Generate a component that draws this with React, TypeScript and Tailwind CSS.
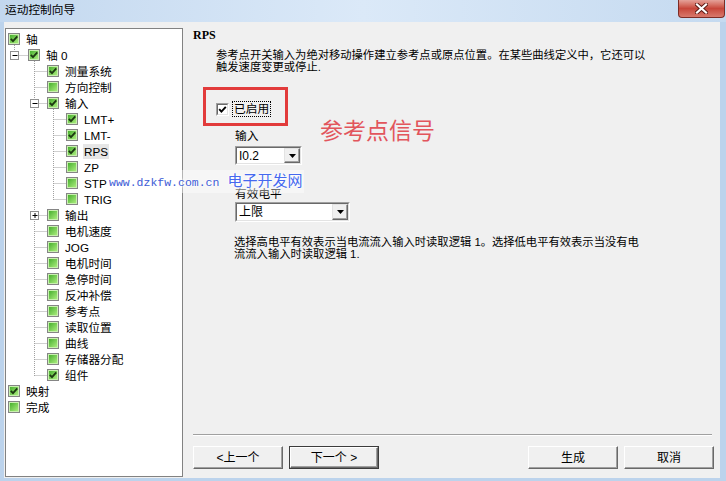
import React from 'react';

type TreeNode = {
  label: string;
  level: number;
  checked?: boolean;
  expander?: 'minus' | 'plus';
  selected?: boolean;
};

const nodes: TreeNode[] = [
  { label: '轴', level: 0, checked: true },
  { label: '轴 0', level: 1, checked: true, expander: 'minus' },
  { label: '测量系统', level: 2, checked: true },
  { label: '方向控制', level: 2 },
  { label: '输入', level: 2, checked: true, expander: 'minus' },
  { label: 'LMT+', level: 3, checked: true },
  { label: 'LMT-', level: 3, checked: true },
  { label: 'RPS', level: 3, checked: true, selected: true },
  { label: 'ZP', level: 3 },
  { label: 'STP', level: 3 },
  { label: 'TRIG', level: 3 },
  { label: '输出', level: 2, expander: 'plus' },
  { label: '电机速度', level: 2 },
  { label: 'JOG', level: 2 },
  { label: '电机时间', level: 2 },
  { label: '急停时间', level: 2 },
  { label: '反冲补偿', level: 2 },
  { label: '参考点', level: 2 },
  { label: '读取位置', level: 2 },
  { label: '曲线', level: 2 },
  { label: '存储器分配', level: 2 },
  { label: '组件', level: 2, checked: true },
  { label: '映射', level: 0, checked: true },
  { label: '完成', level: 0 },
];

// left edge of the checkbox for each level, inside the tree
const indent = [2, 22, 41, 60];
const ROW = 16;
const rowCenter = (i: number) => 2 + i * ROW + 8;

function GreenCheck({ checked }: { checked?: boolean }) {
  return (
    <span className="relative flex h-[12px] w-[12px] shrink-0 items-center justify-center border border-[#858585] bg-[#c9f0b0]">
      <span className="block h-[8px] w-[8px] bg-gradient-to-br from-[#45b02c] to-[#a8ec7c]" />
      {checked && (
        <svg className="absolute left-0 top-0" width="10" height="10" viewBox="0 0 10 10">
          <path d="M1.8 4.8 L4 7.2 L8.3 2.3" fill="none" stroke="#1d3a12" strokeWidth="1.8" />
        </svg>
      )}
    </span>
  );
}

function TreeLines() {
  const dots = { stroke: '#a0a0a0', strokeWidth: 1, strokeDasharray: '1 1' };
  const hLines: React.ReactNode[] = [];
  nodes.forEach((n, i) => {
    if (n.level === 0) return;
    const parentX = indent[n.level - 1] + 6.5;
    const y = rowCenter(i) + 0.5;
    const start = n.expander ? parentX + 5 : parentX;
    hLines.push(<line key={'h' + i} x1={start} y1={y} x2={indent[n.level]} y2={y} {...dots} />);
  });
  const boxes = nodes
    .map((n, i) => ({ n, i }))
    .filter(({ n }) => n.expander)
    .map(({ n, i }) => {
      const cx = indent[n.level - 1] + 6.5;
      const cy = rowCenter(i) + 0.5;
      return (
        <g key={'b' + i}>
          <rect x={cx - 4} y={cy - 4} width="8" height="8" fill="#ffffff" stroke="#919191" />
          <line x1={cx - 2} y1={cy} x2={cx + 3} y2={cy} stroke="#000" />
          {n.expander === 'plus' && <line x1={cx + 0.5} y1={cy - 2.5} x2={cx + 0.5} y2={cy + 2.5} stroke="#000" strokeWidth="1" />}
        </g>
      );
    });
  return (
    <svg className="pointer-events-none absolute left-0 top-0" width="176" height="420">
      <line x1="8.5" y1="16" x2="8.5" y2={rowCenter(1) - 4} {...dots} />
      <line x1="28.5" y1={2 + ROW + 14} x2="28.5" y2={rowCenter(21) + 1} {...dots} />
      <line x1="47.5" y1={2 + 4 * ROW + 14} x2="47.5" y2={rowCenter(10) + 1} {...dots} />
      {hLines}
      {boxes}
    </svg>
  );
}

function Tree() {
  return (
    <div className="relative ml-[1px] mt-[6px] mb-[1px] w-[178px] border border-[#828282] bg-white pt-[2px]">
      <TreeLines />
      {nodes.map((n) => (
        <div
          key={n.label}
          className="relative flex h-[16px] items-center"
          style={{ paddingLeft: indent[n.level] }}
        >
          <GreenCheck checked={n.checked} />
          <span
            className={`ml-[5px] px-[1px] text-[11.7px] leading-[15px] text-black ${n.selected ? 'bg-[#e6e6e6]' : ''}`}
          >
            {n.label}
          </span>
        </div>
      ))}
    </div>
  );
}

function Combo({ value, width, height }: { value: string; width: string; height: string }) {
  return (
    <div className={`flex ${width} ${height} border border-t-[#a0a0a0] border-l-[#a0a0a0] border-r-white border-b-white`}>
      <div className="flex flex-1 border border-t-[#696969] border-l-[#696969] border-r-[#e3e3e3] border-b-[#e3e3e3] bg-white">
        <span className="flex flex-1 items-center pl-[2px] text-[12px] leading-none">{value}</span>
        <div className="flex w-[16px] items-center justify-center border border-t-[#e3e3e3] border-l-[#e3e3e3] border-r-[#696969] border-b-[#696969] bg-[#f0f0f0] shadow-[inset_-1px_-1px_0_#a0a0a0]">
          <svg width="7" height="4" viewBox="0 0 7 4">
            <polygon points="0,0 7,0 3.5,4" fill="#000" />
          </svg>
        </div>
      </div>
    </div>
  );
}

function Btn({ children, isDefault }: { children: React.ReactNode; isDefault?: boolean }) {
  return (
    <div className={`h-[23px] w-[90px] ${isDefault ? 'border border-[#3c3c3c]' : ''}`}>
      <div className="flex h-full w-full items-center justify-center border border-t-white border-l-white border-r-[#696969] border-b-[#696969] bg-[#f0f0f0] text-[12px] shadow-[inset_-1px_-1px_0_#a0a0a0]">
        {children}
      </div>
    </div>
  );
}

export default function App() {
  return (
    <div className="relative flex h-[481px] w-[726px] flex-col overflow-hidden bg-[#bcd3ec] font-['Liberation_Sans','Noto_Sans_CJK_SC',sans-serif] text-black">
      {/* title bar */}
      <div className="flex h-[22px] items-start bg-gradient-to-r from-[#c3d8ef] via-[#dbe9f8] to-[#c5daf0]">
        <span className="ml-[5px] mt-[3px] text-[11.7px] leading-[14px]">运动控制向导</span>
        <div className="ml-auto mr-[1px] flex h-[18px] w-[47px] items-center justify-center rounded-b-[4px] border border-t-0 border-[#7d2c25] bg-gradient-to-b from-[#e4a199] via-[#c7463a] to-[#d8786c]">
          <svg width="13" height="11" viewBox="0 0 13 11">
            <path d="M2 1.5 L11 9.5 M11 1.5 L2 9.5" stroke="#5a1a14" strokeWidth="4" strokeLinecap="square" />
            <path d="M2 1.5 L11 9.5 M11 1.5 L2 9.5" stroke="#ffffff" strokeWidth="2.2" strokeLinecap="square" />
          </svg>
        </div>
      </div>

      {/* window body */}
      <div className="ml-[4px] mr-[6px] mb-[3px] flex flex-1 bg-[#f0f0f0]">
        <Tree />

        <div className="flex min-w-0 flex-1 flex-col">
          <div className="ml-[10px] mt-[6px] h-[14px] font-['Liberation_Serif','Noto_Sans_CJK_SC',serif] text-[12px] font-bold leading-[14px]">
            RPS
          </div>
          <div className="ml-[33px] mt-[7px] whitespace-nowrap text-[11.3px] leading-[12px]">
            参考点开关输入为绝对移动操作建立参考点或原点位置。在某些曲线定义中，它还可以
            <br />
            触发速度变更或停止.
          </div>

          <div className="ml-[33px] mt-[28px] flex h-[16px] items-center">
            <span className="relative flex h-[13px] w-[13px] items-center justify-center border border-t-[#a0a0a0] border-l-[#a0a0a0] border-r-white border-b-white">
              <span className="flex h-[11px] w-[11px] items-center justify-center border border-t-[#696969] border-l-[#696969] border-r-[#e3e3e3] border-b-[#e3e3e3] bg-white">
                <svg width="9" height="9" viewBox="0 0 9 9">
                  <path d="M1.2 4.2 L3.4 6.6 L7.8 1.8" fill="none" stroke="#000" strokeWidth="1.9" />
                </svg>
              </span>
            </span>
            <span className="ml-[3px] border border-dotted border-black px-[1px] text-[11.7px] leading-[14px]">
              已启用
            </span>
          </div>

          <div className="ml-[52px] mt-[12px] h-[14px] text-[11.7px] leading-[14px]">输入</div>
          <div className="ml-[52px] mt-[3px]">
            <Combo value="I0.2" width="w-[67px]" height="h-[19px]" />
          </div>

          <div className="ml-[52px] mt-[22px] h-[14px] text-[11.7px] leading-[14px]">有效电平</div>
          <div className="ml-[52px] mt-[1px]">
            <Combo value="上限" width="w-[115px]" height="h-[20px]" />
          </div>

          <div className="ml-[51px] mt-[14px] whitespace-nowrap text-[11.3px] leading-[12px]">
            选择高电平有效表示当电流流入输入时读取逻辑 1。选择低电平有效表示当没有电
            <br />
            流流入输入时读取逻辑 1.
          </div>

          <div className="flex-1" />

          <div className="ml-[10px] mr-[8px] h-[2px] border-t border-b border-t-[#a0a0a0] border-b-white" />

          <div className="ml-[10px] mr-[6px] mt-[10px] mb-[9px] flex gap-[6px]">
            <Btn>&lt;上一个</Btn>
            <Btn isDefault>下一个 &gt;</Btn>
            <div className="flex-1" />
            <Btn>生成</Btn>
            <Btn>取消</Btn>
          </div>
        </div>
      </div>

      {/* annotations over the screenshot */}
      <div className="pointer-events-none absolute left-[203px] top-[87px] h-[39px] w-[85px] border-[3px] border-[#e23b3b]" />
      <div className="pointer-events-none absolute left-[320px] top-[118px] text-[23px] leading-[27px] text-[#e2555c]">
        参考点信号
      </div>
      <div className="pointer-events-none absolute left-[107px] top-[170px] flex items-baseline whitespace-nowrap bg-white/40 px-[2px] [text-shadow:0_0_3px_#fff,0_0_3px_#fff,0_0_2px_#fff]">
        <span className="font-['Liberation_Mono',monospace] text-[11.5px] text-[#3d5cd6]">www.dzkfw.com.cn</span>
        <span className="ml-[8px] text-[15px] text-[#4569ef]">电子开发网</span>
      </div>
    </div>
  );
}
